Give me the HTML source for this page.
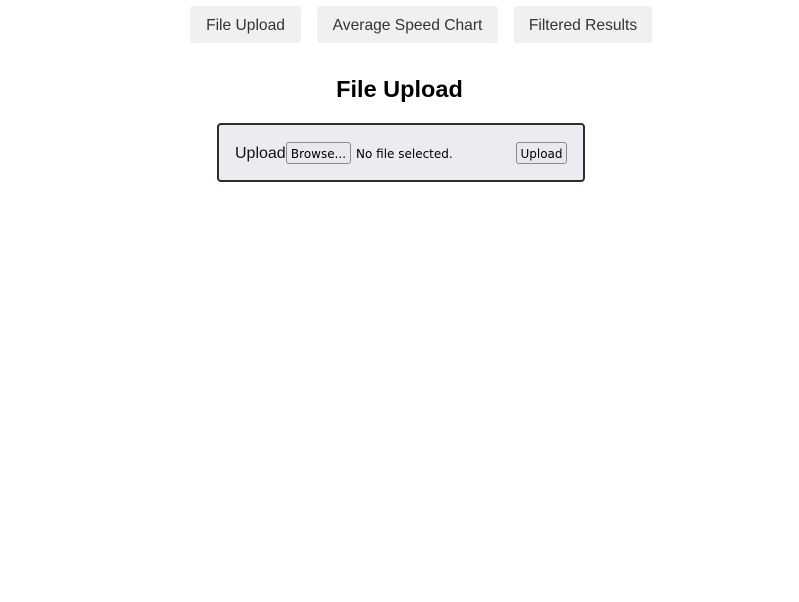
<!DOCTYPE html>
<html><head><style>
*{box-sizing:border-box}
body{margin:0;width:799px;height:602px;background:#fff;font-family:"Liberation Sans",sans-serif;position:relative;overflow:hidden}
.nb{position:absolute;top:6px;height:37px;background:#f0f0f0;border-radius:3px;color:#333;font-size:15.6px;line-height:39px;text-align:center}
h2{position:absolute;left:0;width:799px;top:74px;margin:0;text-align:center;font-size:23.5px;font-weight:bold;color:#000;line-height:30px}
.box{position:absolute;left:217px;top:123px;width:368px;height:59px;border:2px solid #2a2d34;border-radius:4px;background:#ebecf0}
.lbl{position:absolute;left:16px;top:20px;font-size:16px;color:#111}
.btn{position:absolute;top:17px;height:22px;border:1px solid #8a8a8a;border-radius:3px;background:#e9e9ed;font-family:"DejaVu Sans",sans-serif;font-size:12px;line-height:22px;text-align:center;color:#000}
.nf{position:absolute;left:137px;top:22px;font-family:"DejaVu Sans",sans-serif;font-size:12px;color:#000}
</style></head><body>
<div class="nb" style="left:190px;width:111px">File Upload</div>
<div class="nb" style="left:317px;width:181px">Average Speed Chart</div>
<div class="nb" style="left:514px;width:138px">Filtered Results</div>
<h2>File Upload</h2>
<div class="box">
<span class="lbl">Upload</span>
<div class="btn" style="left:67px;width:65px">Browse...</div>
<span class="nf">No file selected.</span>
<div class="btn" style="left:297px;width:51px">Upload</div>
</div>
</body></html>
